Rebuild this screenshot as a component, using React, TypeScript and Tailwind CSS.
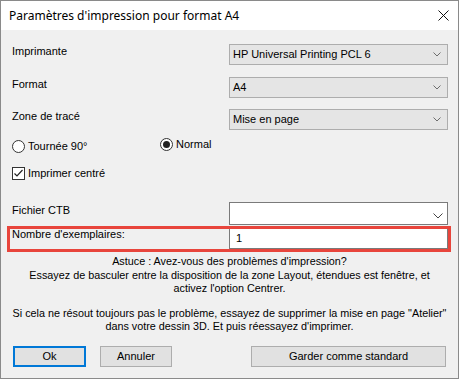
import React from "react";

function Chevron({ dark }: { dark?: boolean }) {
  return dark ? (
    <svg width="10" height="6" viewBox="0 0 10 6" className="shrink-0">
      <path d="M0.5 0.5 L5 5 L9.5 0.5" fill="none" stroke="#444" strokeWidth="1" />
    </svg>
  ) : (
    <svg width="8" height="5" viewBox="0 0 8 5" className="shrink-0">
      <path d="M0.5 0.5 L4 4 L7.5 0.5" fill="none" stroke="#6d6d6d" strokeWidth="1" />
    </svg>
  );
}

function Select({ value }: { value: string }) {
  return (
    <div className="flex items-center justify-between w-[219px] h-[21px] border border-[#adadad] bg-[#e5e5e5] pl-[3px] pr-[6px]">
      <span>{value}</span>
      <Chevron />
    </div>
  );
}

function Radio({ checked, label, className }: { checked?: boolean; label: string; className?: string }) {
  return (
    <div className={"flex items-center gap-[3px] " + (className ?? "")}>
      <span className="w-[13px] h-[13px] rounded-full border border-[#333] bg-white flex items-center justify-center">
        {checked && <span className="w-[7px] h-[7px] rounded-full bg-[#222]" />}
      </span>
      <span>{label}</span>
    </div>
  );
}

export default function App() {
  const rows = [
    { label: "Imprimante", value: "HP Universal Printing PCL 6", mt: "mt-0" },
    { label: "Format", value: "A4", mt: "mt-[12px]" },
    { label: "Zone de tracé", value: "Mise en page", mt: "mt-[11px]" },
  ];

  return (
    <div className="w-[459px] h-[379px] border border-[#8a8a8a] bg-[#f0f0f0] flex flex-col text-black font-['Liberation_Sans',sans-serif] text-[11px] leading-[13px] relative">
      {/* title bar */}
      <div className="h-[29px] bg-white flex items-center justify-between pl-2 pr-[9px] shrink-0">
        <span className="text-[12px] font-['Noto_Sans',sans-serif]">Paramètres d'impression pour format A4</span>
        <svg width="11" height="11" viewBox="0 0 11 11">
          <path d="M0.5 0.5 L10.5 10.5 M10.5 0.5 L0.5 10.5" stroke="#111" strokeWidth="1" />
        </svg>
      </div>

      <div className="flex flex-col pt-[14px] pl-[11px]">
        {rows.map((r) => (
          <div key={r.label} className={"flex items-start " + r.mt}>
            <span className="w-[217px] pt-[1px]">{r.label}</span>
            <Select value={r.value} />
          </div>
        ))}

        <div className="flex items-start mt-[8px] h-[16px]">
          <Radio label="Tournée 90°" className="w-[148px] mt-[2px]" />
          <Radio label="Normal" checked />
        </div>

        <div className="flex items-center gap-[3px] mt-[13px]">
          <span className="w-[13px] h-[13px] border border-[#333] bg-white flex items-center justify-center">
            <svg width="11" height="11" viewBox="0 0 11 11">
              <path d="M1.5 5.5 L4 8 L9.5 2" fill="none" stroke="#222" strokeWidth="1.2" />
            </svg>
          </span>
          <span>Imprimer centré</span>
        </div>

        <div className="flex items-start mt-[22px]">
          <span className="w-[217px] pt-[2px]">Fichier CTB</span>
          <div className="flex items-center justify-end w-[219px] h-[23px] border border-[#7a7a7a] bg-white pr-[4px] pt-[5px]">
            <Chevron dark />
          </div>
        </div>

        <div className="flex items-start mt-[2px]">
          <span className="w-[217px] pt-[1px]">Nombre d'exemplaires:</span>
          <div className="flex items-center w-[219px] h-[22px] border border-[#7a7a7a] bg-white pl-[6px]">1</div>
        </div>
      </div>

      <div className="mt-[6px] text-center text-[10.8px] leading-[13.5px] whitespace-nowrap">
        <p>Astuce : Avez-vous des problèmes d'impression?</p>
        <p>Essayez de basculer entre la disposition de la zone Layout, étendues est fenêtre, et</p>
        <p>activez l'option Centrer.</p>
        <p className="mt-[11px]">Si cela ne résout toujours pas le problème, essayez de supprimer la mise en page "Atelier"</p>
        <p>dans votre dessin 3D. Et puis réessayez d'imprimer.</p>
      </div>

      <div className="absolute left-[6px] top-[225px] w-[444px] h-[26px] border-[3px] border-[#e8453c]" />

      <div className="flex items-center mt-auto mb-[11px] pl-[12px]">
        <button className="w-[73px] h-[21px] border-2 border-[#0078d7] bg-[#e1e1e1]">Ok</button>
        <button className="w-[72px] h-[21px] border border-[#adadad] bg-[#e1e1e1] ml-[14px]">Annuler</button>
        <button className="w-[195px] h-[21px] border border-[#adadad] bg-[#e1e1e1] ml-[79px]">Garder comme standard</button>
      </div>
    </div>
  );
}
